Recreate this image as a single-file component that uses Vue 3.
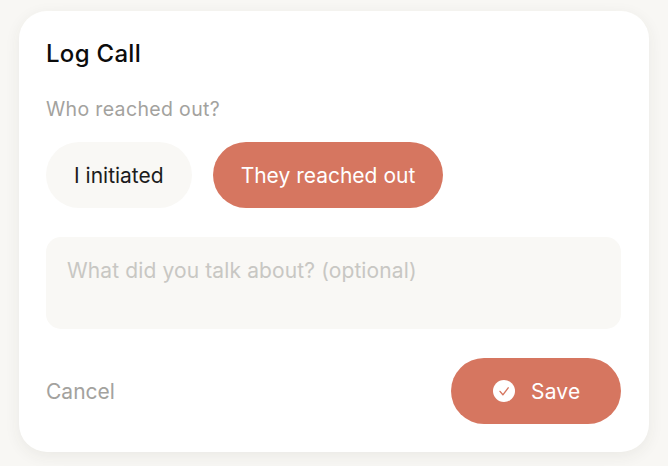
<script setup>
import { ref } from 'vue'
const note = ref('')
</script>

<template>
  <div class="page">
    <div class="card">
      <h2 class="title">Log Call</h2>
      <p class="label">Who reached out?</p>
      <div class="chips">
        <button class="chip">I initiated</button>
        <button class="chip active">They reached out</button>
      </div>
      <textarea v-model="note" class="note" placeholder="What did you talk about? (optional)"></textarea>
      <div class="actions">
        <button class="cancel">Cancel</button>
        <button class="save">
          <svg class="check" width="22" height="22" viewBox="0 0 22 22">
            <circle cx="11" cy="11" r="11" fill="#fff" />
            <path d="M7 11.4 L9.9 14.8 L15.2 7.8" fill="none" stroke="#d67660" stroke-width="1.4" stroke-linecap="round" stroke-linejoin="round" />
          </svg>
          <span>Save</span>
        </button>
      </div>
    </div>
  </div>
</template>

<style>
html, body { margin: 0; background: #f8f7f4; }
</style>

<style scoped>
.page {
  width: 668px;
  height: 466px;
  box-sizing: border-box;
  padding: 11px 19px 14px;
  background: #f8f7f4;
  font-family: Inter, "Liberation Sans", sans-serif;
  overflow: hidden;
}
.card {
  width: 630px;
  height: 441px;
  box-sizing: border-box;
  padding: 28px 27px 0;
  background: #fff;
  border-radius: 28px;
  box-shadow: 0 4px 16px rgba(60, 50, 40, 0.07);
}
.title {
  margin: 0;
  font-size: 24px;
  line-height: 30px;
  font-weight: 500;
  letter-spacing: 0.3px;
  color: #0c0c0c;
}
.label {
  margin: 27px 0 0;
  font-size: 19.5px;
  line-height: 26px;
  font-weight: 400;
  letter-spacing: 0.35px;
  color: #a3a29e;
}
.chips {
  display: flex;
  gap: 21px;
  margin-top: 20px;
}
button {
  border: 0;
  font-family: inherit;
  cursor: pointer;
}
.chip {
  height: 66px;
  padding: 0 28px;
  border-radius: 33px;
  background: #f9f8f5;
  color: #1c1c1c;
  font-size: 21px;
}
.chip.active {
  background: #d67660;
  color: #fff;
}
.note {
  display: block;
  width: 575px;
  height: 92px;
  margin-top: 29px;
  padding: 20px 21px;
  box-sizing: border-box;
  border: 0;
  outline: 0;
  resize: none;
  border-radius: 15px;
  background: #f9f8f5;
  font-family: inherit;
  font-size: 21px;
  line-height: 28px;
  letter-spacing: 0.12px;
  color: #333;
}
.note::placeholder {
  color: #c8c7c3;
  opacity: 1;
}
.actions {
  width: 575px;
  display: flex;
  justify-content: space-between;
  align-items: center;
  margin-top: 29px;
}
.cancel {
  padding: 0;
  background: none;
  color: #a3a29e;
  font-size: 21px;
}
.save {
  display: flex;
  align-items: center;
  gap: 16px;
  height: 66px;
  width: 170px;
  padding: 0 0 0 42px;
  box-sizing: border-box;
  border-radius: 33px;
  background: #d67660;
  color: #fff;
  font-size: 21px;
  letter-spacing: 0.2px;
}
.check { flex: none; }
</style>
